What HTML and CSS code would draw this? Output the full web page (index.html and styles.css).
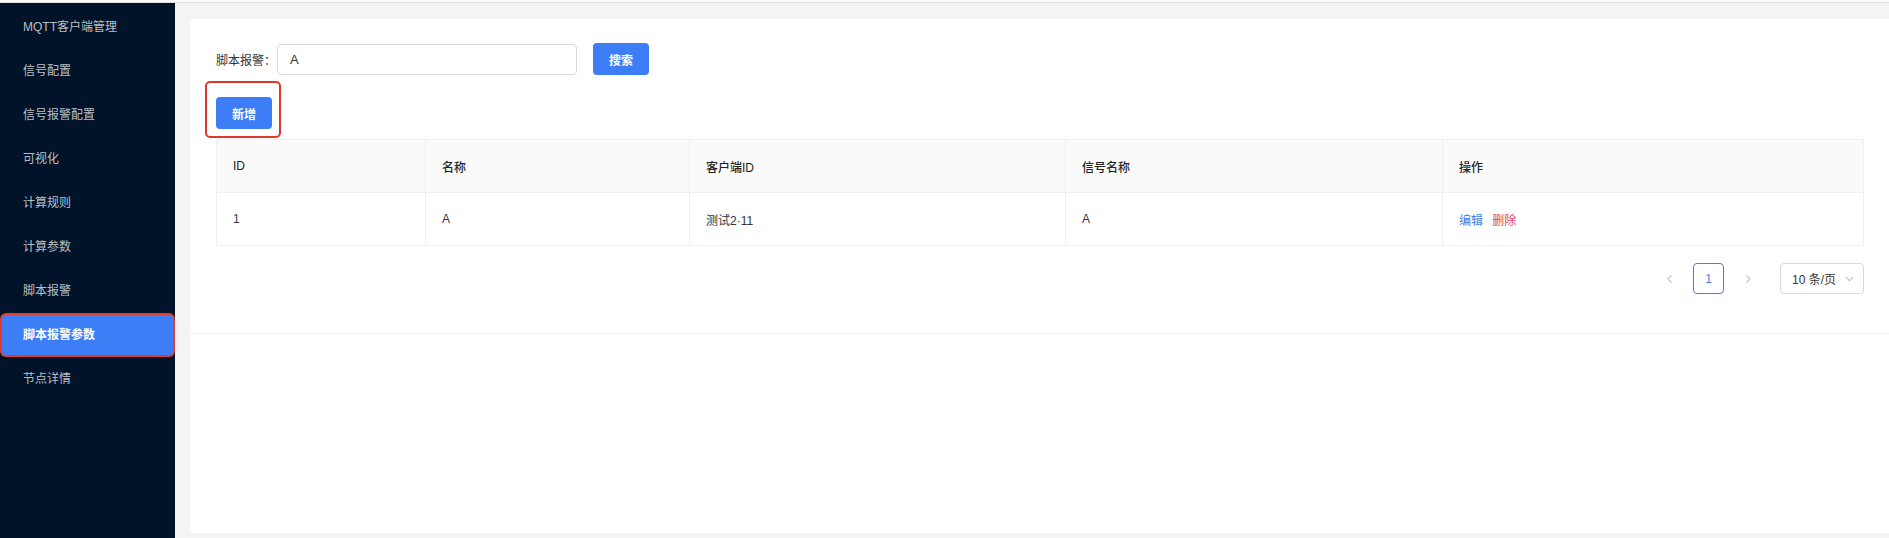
FILE: index.html
```html
<!DOCTYPE html>
<html lang="zh-CN">
<head>
    <meta charset="UTF-8">
    <meta name="viewport" content="width=device-width, initial-scale=1.0">
    <title>脚本报警参数</title>
    <link rel="stylesheet" href="styles.css">
</head>
<body>
    <div class="topline"></div>
    <div class="layout">
        <aside class="sidebar">
            <ul class="menu">
                <li class="menu-item">MQTT客户端管理</li>
                <li class="menu-item">信号配置</li>
                <li class="menu-item">信号报警配置</li>
                <li class="menu-item">可视化</li>
                <li class="menu-item">计算规则</li>
                <li class="menu-item">计算参数</li>
                <li class="menu-item">脚本报警</li>
                <li class="menu-item active"><span>脚本报警参数</span></li>
                <li class="menu-item">节点详情</li>
            </ul>
        </aside>

        <main class="main">
            <div class="panel">
                <div class="card">
                    <form class="search-form">
                        <label for="script-alarm">脚本报警：</label>
                        <input type="text" id="script-alarm" value="A">
                        <button type="button" class="btn">搜索</button>
                    </form>

                    <div class="toolbar">
                        <span class="marked">
                            <button type="button" class="btn">新增</button>
                        </span>
                    </div>

                    <table class="data-table">
                        <colgroup>
                            <col style="width: 209px">
                            <col style="width: 264px">
                            <col style="width: 376px">
                            <col style="width: 377px">
                            <col>
                        </colgroup>
                        <thead>
                            <tr>
                                <th>ID</th>
                                <th>名称</th>
                                <th>客户端ID</th>
                                <th>信号名称</th>
                                <th>操作</th>
                            </tr>
                        </thead>
                        <tbody>
                            <tr>
                                <td>1</td>
                                <td>A</td>
                                <td>测试2·11</td>
                                <td>A</td>
                                <td>
                                    <a class="link">编辑</a>
                                    <a class="link danger">删除</a>
                                </td>
                            </tr>
                        </tbody>
                    </table>

                    <div class="pagination">
                        <span class="page-arrow">
                            <svg width="10" height="10" viewBox="0 0 10 10"><path d="M6.5 1.5 3 5l3.5 3.5" fill="none" stroke="#c4c4c4" stroke-width="1.1"/></svg>
                        </span>
                        <span class="page-item current">1</span>
                        <span class="page-arrow">
                            <svg width="10" height="10" viewBox="0 0 10 10"><path d="M3.5 1.5 7 5 3.5 8.5" fill="none" stroke="#c4c4c4" stroke-width="1.1"/></svg>
                        </span>
                        <span class="page-size">
                            10 条/页
                            <svg width="11" height="11" viewBox="0 0 10 10"><path d="M1.5 3.5 5 7l3.5-3.5" fill="none" stroke="#c4c4c4" stroke-width="1"/></svg>
                        </span>
                    </div>
                </div>
            </div>
        </main>
    </div>
</body>
</html>
```

FILE: styles.css
```css
:root {
    --sidebar-bg: #001329;
    --primary: #3d7ef7;
    --danger: #e8415a;
    --border: #efefef;
    --text: #333;
}

* {
    box-sizing: border-box;
}

body {
    margin: 0;
    font-family: "Liberation Sans", "Noto Sans CJK SC", sans-serif;
    font-size: 12px;
    color: var(--text);
    background: #f4f4f4;
    height: 538px;
    overflow: hidden;
}

.topline {
    height: 3px;
    background: #fafafa;
    border-bottom: 1px solid #dedede;
}

.layout {
    display: flex;
    height: 535px;
}

/* Sidebar */
.sidebar {
    width: 175px;
    flex-shrink: 0;
    background: var(--sidebar-bg);
}

.menu {
    list-style: none;
    margin: 0;
    padding: 2px 0 0;
}

.menu-item {
    height: 44px;
    line-height: 44px;
    padding-left: 23px;
    color: rgba(255, 255, 255, 0.74);
    cursor: pointer;
}

.menu-item.active {
    padding: 2px 2px;
}

.menu-item.active span {
    display: block;
    height: 40px;
    line-height: 40px;
    padding-left: 21px;
    background: var(--primary);
    color: #fff;
    font-weight: bold;
    border-radius: 4px;
    box-shadow: 0 0 0 2px #e33b2e;
}

/* Main */
.main {
    flex: 1;
    padding: 16px 0 5px 15px;
}

.panel {
    height: 100%;
    background: #fff;
    border-radius: 4px 0 0 4px;
}

.card {
    padding: 24px 25px 39px 26px;
    border-bottom: 1px solid #f2f2f2;
}

.search-form {
    display: flex;
    align-items: center;
    height: 32px;
}

.search-form label {
    width: 61px;
}

.search-form input {
    width: 300px;
    height: 31px;
    padding: 0 12px;
    border: 1px solid #d9d9d9;
    border-radius: 4px;
    font: inherit;
    font-size: 13px;
    color: var(--text);
}

.btn {
    height: 32px;
    width: 56px;
    border: none;
    border-radius: 4px;
    background: var(--primary);
    color: #fff;
    font: inherit;
    font-weight: bold;
    cursor: pointer;
}

.search-form .btn {
    margin-left: 16px;
}

.toolbar {
    margin-top: 22px;
    height: 32px;
}

.marked {
    position: relative;
    display: inline-block;
}

.marked .btn {
    display: block;
}

.marked::after {
    content: "";
    position: absolute;
    top: -16px;
    left: -11px;
    right: -9px;
    bottom: -9px;
    border: 2px solid #e0392b;
    border-radius: 5px;
    pointer-events: none;
}

/* Table */
.data-table {
    width: 100%;
    margin-top: 10px;
    border-collapse: collapse;
    table-layout: fixed;
}

.data-table th,
.data-table td {
    height: 53px;
    padding: 0 16px;
    text-align: left;
    border: 1px solid var(--border);
}

.data-table th {
    background: #fafafa;
    font-weight: 500;
    color: #222;
}

.link {
    color: #3b80f0;
    margin-right: 6px;
    cursor: pointer;
}

.link.danger {
    color: var(--danger);
}

/* Pagination */
.pagination {
    display: flex;
    justify-content: flex-end;
    align-items: center;
    gap: 8px;
    margin-top: 17px;
    height: 31px;
}

.page-arrow,
.page-item {
    width: 31px;
    height: 31px;
    display: flex;
    align-items: center;
    justify-content: center;
}

.page-item.current {
    border: 1px solid #3f7ff0;
    border-radius: 4px;
    color: #3f7ff0;
}

.page-size {
    margin-left: 9px;
    width: 84px;
    height: 31px;
    display: flex;
    align-items: center;
    justify-content: space-between;
    padding: 0 8px 0 11px;
    border: 1px solid #d9d9d9;
    border-radius: 4px;
    font-size: 12px;
}
```
